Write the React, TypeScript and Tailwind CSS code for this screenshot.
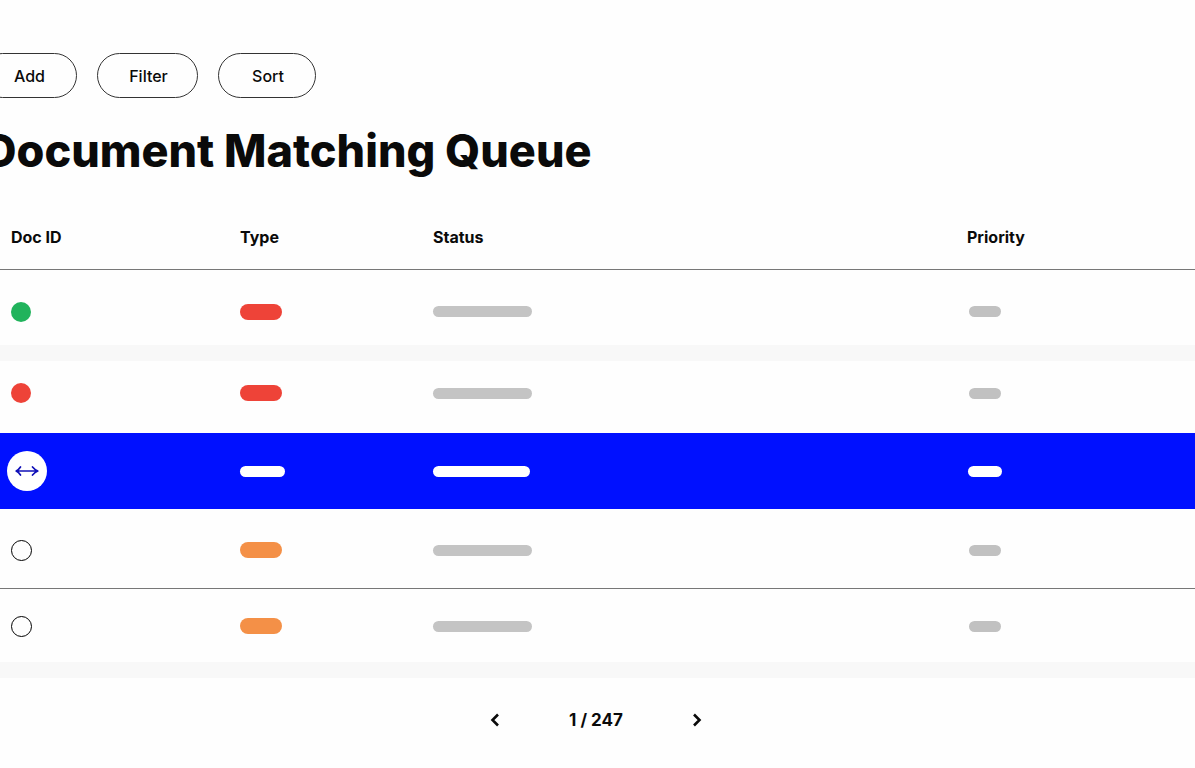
type Row = {
  id: string;
  row: string;
  marker: 'matched' | 'failed' | 'matching' | 'open';
  pill: string;
  status: string;
  priority: string;
};

const grayStatus = 'h-[11px] w-[99px] bg-[#c4c4c4]';
const grayPriority = 'h-[11px] w-8 bg-[#c1c1c1] ml-[2px]';

const rows: Row[] = [
  { id: 'r1', row: 'h-[76px] *:pt-[9px]', marker: 'matched', pill: 'h-4 w-[42px] bg-[#ee4338]', status: grayStatus, priority: grayPriority },
  { id: 'r2', row: 'h-[72px] *:pb-2', marker: 'failed', pill: 'h-4 w-[42px] bg-[#ee4338]', status: grayStatus, priority: grayPriority },
  { id: 'r3', row: 'h-[76px] bg-[#0010ff]', marker: 'matching', pill: 'h-[11px] w-[45px] bg-white', status: 'h-[11px] w-[97px] bg-white', priority: 'h-[11px] w-[34px] bg-white ml-[1px]' },
  { id: 'r4', row: 'h-[79px] border-b border-[#777] *:pt-1', marker: 'open', pill: 'h-4 w-[42px] bg-[#f49047]', status: grayStatus, priority: grayPriority },
  { id: 'r5', row: 'h-[74px] *:pt-[2px]', marker: 'open', pill: 'h-4 w-[42px] bg-[#f49047]', status: grayStatus, priority: grayPriority },
];

function Marker({ kind }: { kind: Row['marker'] }) {
  if (kind === 'matching') {
    return (
      <button type="button" aria-label="Match" className="-ml-1 flex size-10 items-center justify-center rounded-full bg-white">
        <svg width="24" height="12" viewBox="0 0 24 12" fill="none" stroke="#1010b8" strokeWidth="1.7" strokeLinecap="round" strokeLinejoin="round">
          <path d="M1.200 6H22.800M5.500 2Q3.800 4.600 1.200 6Q3.800 7.400 5.500 10M17.500 2Q19.800 4.800 22.800 6Q19.800 7.200 17.500 10" />
        </svg>
      </button>
    );
  }
  if (kind === 'open') return <span className="block size-[21px] rounded-full border border-black" />;
  return <span className={kind === 'matched' ? 'block size-5 rounded-full bg-[#21b35c]' : 'block size-5 rounded-full bg-[#ee4338]'} />;
}

function Divider() {
  return (
    <tr aria-hidden="true">
      <td colSpan={4} className="h-4 bg-[#f8f8f8] p-0" />
    </tr>
  );
}

function TableRow({ item }: { item: Row }) {
  return (
    <tr className={item.row} aria-selected={item.marker === 'matching'}>
      <td className="px-[11px]"><Marker kind={item.marker} /></td>
      <td className="px-[11px]"><span className={`block rounded-full ${item.pill}`} /></td>
      <td className="px-[11px]"><span className={`block rounded-full ${item.status}`} /></td>
      <td className="px-[11px]"><span className={`block rounded-full ${item.priority}`} /></td>
    </tr>
  );
}

const pillButton = 'h-[45px] rounded-full border border-[#333] pl-[2px] text-base font-medium';

export default function App() {
  return (
    <main className="min-h-screen overflow-hidden bg-[#fefefe] font-['Inter','Liberation_Sans',sans-serif] text-[#0a0a0a]">
      <div className="-ml-5 flex gap-5 pt-[53px]">
        <button type="button" className={`${pillButton} w-[97px]`}>Add</button>
        <button type="button" className={`${pillButton} w-[101px]`}>Filter</button>
        <button type="button" className={`${pillButton} w-[98px]`}>Sort</button>
      </div>
      <h1 className="-ml-4 pt-[23px] text-[45px] leading-[60px] font-extrabold whitespace-nowrap">Document Matching Queue</h1>
      <table className="mt-6 w-full table-fixed border-collapse text-left">
        <thead>
          <tr className="h-[64px] border-b border-[#777] text-base leading-6 font-bold *:px-[11px] *:align-middle">
            <th scope="col" className="w-[229px]">Doc ID</th>
            <th scope="col" className="w-[193px]">Type</th>
            <th scope="col">Status</th>
            <th scope="col" className="w-[20%]">Priority</th>
          </tr>
        </thead>
        <tbody>
          <TableRow item={rows[0]} />
          <Divider />
          {rows.slice(1).map((item) => <TableRow key={item.id} item={item} />)}
          <Divider />
        </tbody>
      </table>
      <nav aria-label="Pagination" className="flex items-center justify-center gap-[62px] pt-[30px] pr-[3px]">
        <button type="button" aria-label="Previous page" className="flex size-6 items-center justify-center">
          <svg width="10" height="14" viewBox="0 0 10 14" fill="none" stroke="currentColor" strokeWidth="2.6"><path d="M8 1.500L2.500 7L8 12.500" /></svg>
        </button>
        <span className="text-[17px] leading-6 font-bold">1 / 247</span>
        <button type="button" aria-label="Next page" className="flex size-6 items-center justify-center">
          <svg width="10" height="14" viewBox="0 0 10 14" fill="none" stroke="currentColor" strokeWidth="2.6"><path d="M2 1.500L7.500 7L2 12.500" /></svg>
        </button>
      </nav>
    </main>
  );
}
